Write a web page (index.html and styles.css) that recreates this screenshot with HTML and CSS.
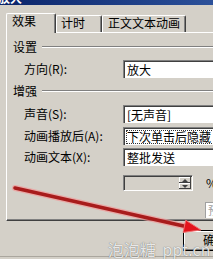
FILE: index.html
```html
<!DOCTYPE html>
<html>
<head>
<meta charset="utf-8">
<link rel="stylesheet" href="styles.css">
</head>
<body>
<div class="dialog">
  <div class="titlebar"><span class="title">放大</span></div>
  <div class="tabs">
    <div class="tab active">效果</div>
    <div class="tab t2">计时</div>
    <div class="tab t3">正文文本动画</div>
  </div>
  <div class="panel">
    <div class="group"><span>设置</span><i class="rule"></i></div>
    <div class="row r1"><label>方向(R):</label><div class="field">放大</div></div>
    <div class="group g2"><span>增强</span><i class="rule"></i></div>
    <div class="row r2"><label>声音(S):</label><div class="field">[无声音]</div></div>
    <div class="row r3"><label>动画播放后(A):</label><div class="field"><span class="focus">下次单击后隐藏</span></div></div>
    <div class="row r4"><label>动画文本(X):</label><div class="field">整批发送</div></div>
    <div class="row r5"><span class="spacer"></span><div class="spin"><div class="spinbtns"><span class="sb"><b class="up"></b></span><span class="sb"><b class="down"></b></span></div></div><span class="pct">%</span></div>
    <div class="row r6"><div class="side">预览</div></div>
  </div>
  <div class="footer"><div class="btn">确定</div></div>
  <div class="bottomline"></div>
</div>
<svg class="arrow" width="213" height="259" viewBox="0 0 213 259">
  <line x1="15" y1="188" x2="188" y2="227" stroke="#f29a9a" stroke-width="6" stroke-linecap="round" opacity="0.7"/>
  <line x1="15" y1="188" x2="188" y2="227" stroke="#a81c1c" stroke-width="3.5" stroke-linecap="round"/>
  <polygon points="201,230 185.7,220.2 183.1,232.4" fill="#e3141c" stroke="#f07070" stroke-width="1"/>
</svg>
<div class="watermark">泡泡糖 ppt.cn</div>
</body>
</html>
```
FILE: styles.css
```css
body {
  margin: 0;
  width: 213px;
  height: 259px;
  overflow: hidden;
  position: relative;
  background: #d4d0c8;
  font-family: "Noto Sans CJK SC", "Liberation Sans", sans-serif;
  font-size: 12px;
  color: #000;
}
.dialog {
  width: 213px;
  height: 259px;
  overflow: hidden;
}
.titlebar {
  height: 5px;
  overflow: hidden;
  background: linear-gradient(90deg, #0a246a, #2c519a);
}
.title {
  display: block;
  color: #fff;
  font-weight: bold;
  line-height: 14px;
  margin-top: -9px;
  margin-left: -2px;
}
.tabs {
  display: flex;
  align-items: flex-start;
  margin-top: 8px;
  padding-left: 6px;
  height: 19px;
}
.tab {
  box-sizing: border-box;
  height: 17px;
  margin-top: 2px;
  border: 1px solid #fff;
  border-bottom: 0;
  border-right-color: #404040;
  box-shadow: inset -1px 0 #808080;
  border-radius: 2px 2px 0 0;
  line-height: 14px;
  padding-left: 4px;
  white-space: nowrap;
  background: #d4d0c8;
}
.tab.active {
  height: 20px;
  margin-top: 0;
  position: relative;
  z-index: 1;
  padding-left: 5px;
  width: 50px;
}
.tab.t2 { width: 46px; }
.tab.t3 { width: 84px; padding-left: 5px; }
.panel {
  box-sizing: content-box;
  margin-left: 6px;
  width: 300px;
  height: 187px;
  border-top: 1px solid #fff;
  border-left: 1px solid #fff;
  border-bottom: 1px solid #404040;
  box-shadow: inset 0 -1px #808080;
  overflow: hidden;
}
.group {
  display: flex;
  align-items: center;
  height: 14px;
  line-height: 14px;
  padding-left: 6px;
  margin-top: 7px;
}
.group span { flex: none; }
.rule {
  flex: 1;
  height: 0;
  border-top: 1px solid #808080;
  border-bottom: 1px solid #fff;
  margin-left: 5px;
}
.g2 { margin-top: 6px; }
.row {
  display: flex;
  align-items: center;
  height: 18px;
}
.r1 { margin-top: 6px; }
.r2 { margin-top: 7px; }
.r3 { margin-top: 4px; }
.r4 { margin-top: 3px; }
.r5 { margin-top: 9px; height: 16px; }
.r6 { margin-top: 11px; height: 16px; padding-left: 198px; }
label, .spacer {
  width: 116px;
  padding-left: 17px;
  box-sizing: border-box;
  flex: none;
  line-height: 14px;
  white-space: nowrap;
}
.field {
  box-sizing: border-box;
  height: 18px;
  width: 120px;
  flex: none;
  background: #fff;
  border-top: 1px solid #808080;
  border-left: 1px solid #808080;
  box-shadow: inset 1px 1px #404040;
  padding-left: 3px;
  line-height: 14px;
  display: flex;
  align-items: center;
  white-space: nowrap;
}
.focus {
  border: 1px dotted #333;
  margin-left: -1px;
  padding-right: 2px;
  line-height: 12px;
}
.spin {
  box-sizing: border-box;
  width: 70px;
  height: 16px;
  flex: none;
  border-top: 1px solid #808080;
  border-left: 1px solid #808080;
  border-bottom: 1px solid #fff;
  border-right: 1px solid #fff;
  box-shadow: inset 1px 1px #404040, inset -1px -1px #d4d0c8;
  display: flex;
  justify-content: flex-end;
  padding: 1px;
}
.spinbtns {
  width: 12px;
  display: flex;
  flex-direction: column;
}
.sb {
  flex: 1;
  background: #d4d0c8;
  box-shadow: inset -1px -1px #404040, inset 1px 1px #fff;
  display: flex;
  align-items: center;
  justify-content: center;
}
.up {
  width: 0;
  height: 0;
  border-left: 3px solid transparent;
  border-right: 3px solid transparent;
  border-bottom: 3px solid #404040;
}
.down {
  width: 0;
  height: 0;
  border-left: 3px solid transparent;
  border-right: 3px solid transparent;
  border-top: 3px solid #404040;
}
.pct {
  margin-left: 13px;
  line-height: 14px;
}
.side {
  box-sizing: border-box;
  width: 30px;
  height: 16px;
  flex: none;
  background: #fff;
  border-left: 1px solid #a0a0a0;
  border-top: 1px solid #a0a0a0;
  color: #a0a0a0;
  font-size: 11px;
  line-height: 14px;
  padding-left: 2px;
  white-space: nowrap;
}
.footer {
  margin-top: 9px;
  padding-left: 183px;
  height: 21px;
}
.btn {
  box-sizing: border-box;
  width: 80px;
  height: 21px;
  border: 1px solid #000;
  border-right: 0;
  box-shadow: inset 1px 1px #fff, inset 0 -1px #808080;
  padding-left: 19px;
  line-height: 17px;
  white-space: nowrap;
}
.bottomline {
  margin-top: 5px;
  height: 1px;
  background: #aaa69e;
}
.arrow {
  position: absolute;
  left: 0;
  top: 0;
  pointer-events: none;
}
.watermark {
  position: absolute;
  left: 108px;
  top: 239px;
  font-size: 16px;
  line-height: 20px;
  word-spacing: 3px;
  color: rgba(255, 255, 255, 0.85);
  text-shadow: 0 0 1px rgba(70, 70, 70, 0.9);
  white-space: nowrap;
}
```
